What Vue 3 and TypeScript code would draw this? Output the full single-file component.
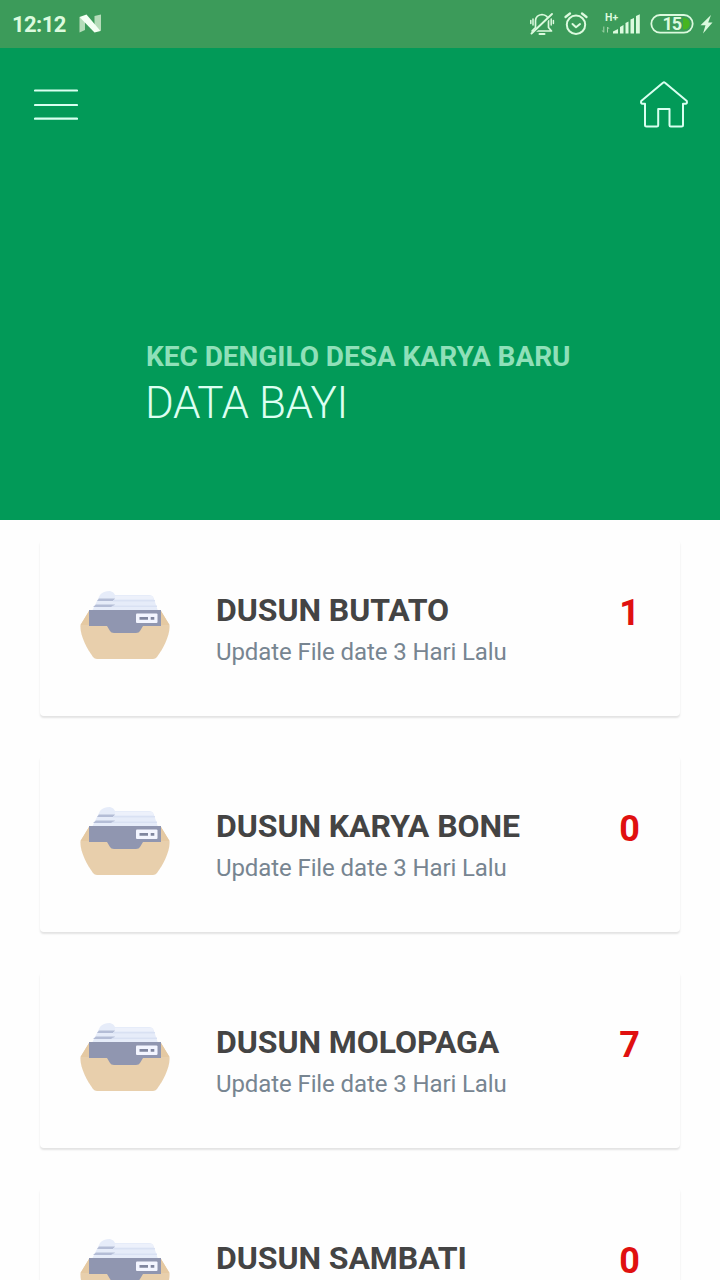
<script setup lang="ts">
interface Dusun {
  name: string
  note: string
  count: number
}

const rows: Dusun[] = [
  { name: 'DUSUN BUTATO', note: 'Update File date 3 Hari Lalu', count: 1 },
  { name: 'DUSUN KARYA BONE', note: 'Update File date 3 Hari Lalu', count: 0 },
  { name: 'DUSUN MOLOPAGA', note: 'Update File date 3 Hari Lalu', count: 7 },
  { name: 'DUSUN SAMBATI', note: 'Update File date 3 Hari Lalu', count: 0 },
]
</script>

<template>
  <div class="screen">
    <header class="status">
      <span class="time">12:12</span>
      <svg class="nougat" width="24" height="20" viewBox="0 0 24 20">
        <path d="M1.500 3 L7 6 V16 L1.500 18.500Z" fill="#b5dcb9" />
        <path d="M16.500 2 L23 .5 V17 L16.500 14Z" fill="#b5dcb9" />
        <path d="M1.500 3 L8.500 .5 L22.500 17 L16.500 18.500Z" fill="#f4fff4" />
      </svg>
      <svg class="indicators" width="192" height="48" viewBox="0 0 192 48">
        <g fill="none" stroke="#dcfade" stroke-width="1.700" stroke-linecap="round" stroke-linejoin="round">
          <path d="M4 31 H23.500 L20.500 27.500 V20.500 Q20 15 14 14.500 Q8 15 7.500 20.500 V27.500Z" />
          <path d="M11.500 34 H16.500" stroke-width="2" />
          <path d="M4.500 34 L25 14.500" stroke="#3c9b5a" stroke-width="2" />
          <path d="M3.500 33.500 L24 14" stroke-width="1.900" />
          <path d="M5 19 V25 M2.800 20.500 V23.500 M23.200 19 V25 M25.400 20.500 V23.500" stroke-width="1.500" />
          <circle cx="48" cy="24.800" r="9.200" stroke-width="2" />
          <path d="M44.500 24 L48 27.200 L52 24" stroke-width="2" />
          <path d="M37.500 17 L42 13.500 M54 13.500 L58.500 17" stroke-width="2.300" />
        </g>
        <text x="77" y="21" class="net">H+</text>
        <path d="M75.800 26.500 V32 M74.300 30.500 L75.800 32.500 M79.500 32.500 V27 L81 28.800" fill="none" stroke="#a4d5aa" stroke-width="1" />
        <g fill="#dcfade">
          <path d="M85 33.500 V31.500 L90 29 V33.500Z" />
          <path d="M92 33.500 V27 L95.500 25 V33.500Z" />
          <path d="M97.500 33.500 V23 L100.500 21.500 V33.500Z" />
          <path d="M102.500 33.500 V19.500 L106 18 V33.500Z" />
          <path d="M108 33.500 V16 L111.800 14.200 V33.500Z" />
        </g>
        <rect x="123.300" y="15" width="41.400" height="17.600" rx="8.800" fill="none" stroke="#dcfade" stroke-width="1.800" />
        <path d="M155 18 H156 A5.800 5.800 0 0 1 156 29.600 H155Z" fill="#47b51f" />
        <text x="134.500" y="30.300" class="level">15</text>
        <path d="M183 15 L172.500 25.200 H177.500 L175 33.500 L184.500 22.500 H180.200Z" fill="#dcfade" />
      </svg>
    </header>

    <section class="hero">
      <nav class="toolbar">
        <svg class="menu" width="44" height="32" viewBox="0 0 44 32">
          <path d="M1 1.500 H43 M1 16 H43 M1 29.700 H43" stroke="#d9fff0" stroke-width="2.200" stroke-linecap="round" />
        </svg>
        <svg class="home" width="50" height="50" viewBox="0 0 50 50">
          <path
            d="M24 2.700 Q25 2 26 2.700 L47.800 21 Q48.500 23.700 46.500 23.700 H44 V45 Q44 46.500 42.500 46.500 H31.800 Q30.500 46.500 30.500 45.200 V29 H19.200 V45.200 Q19.200 46.500 17.900 46.500 H7.500 Q6 46.500 6 45 V23.700 H3.500 Q1.500 23.700 2.200 21Z"
            fill="none"
            stroke="#d9fff0"
            stroke-width="2"
            stroke-linejoin="round"
          />
        </svg>
      </nav>
      <div class="heading">
        <div class="region">KEC DENGILO DESA KARYA BARU</div>
        <h1>DATA BAYI</h1>
      </div>
    </section>

    <main class="list">
      <article v-for="row in rows" :key="row.name" class="card">
        <svg class="box" width="90" height="70" viewBox="0 0 90 70">
          <path d="M20 4 Q23 0 30 0 Q34 1 35 4 H69 Q73 4 74 8 L78 20 H12Z" fill="#e6ecf9" />
          <path d="M35 5 H73 V8 H35Z" fill="#edf1fb" />
          <path d="M19 7.500 H35 L33 10 H17Z M16 13.500 H35 L33 16 H13Z" fill="#b4bdd6" />
          <path d="M33 9 H75 V10.500 H33Z M33 14.500 H77 V16 H31Z" fill="#d9e1f3" />
          <path d="M9 20 H81 L89.500 34 C90.500 44 83 58 77 66 Q75.500 68 73 68 H17 Q14.500 68 13 66 C7 58 -.5 44 .5 34Z" fill="#e8cfac" />
          <path d="M9 20 L.5 34 H9Z M81 20 L89.500 34 H81Z" fill="#e5c9a2" />
          <path d="M9 19 H81 V35 H63 L60 40 Q59 42 56 42 H34 Q31 42 30 40 L27 35 H9Z" fill="#9096b0" />
          <rect x="56" y="22.500" width="21.500" height="9.500" rx="1" fill="#f3f5ff" />
          <path d="M59.500 27.300 H68 M70.700 27.300 H74.300" stroke="#80869f" stroke-width="2.800" />
        </svg>
        <div class="copy">
          <h2>{{ row.name }}</h2>
          <p>{{ row.note }}</p>
        </div>
        <strong>{{ row.count }}</strong>
      </article>
    </main>
  </div>
</template>

<style>
body {
  margin: 0;
  overflow: hidden;
}
</style>

<style scoped>
.screen {
  width: 720px;
  height: 1280px;
  overflow: hidden;
  background: #fefefe;
  font-family: Roboto, sans-serif;
}
.status {
  display: flex;
  align-items: center;
  box-sizing: border-box;
  height: 48px;
  padding-left: 12px;
  background: #3c9b5a;
}
.time {
  width: 66px;
  color: #dcfade;
  font-size: 22px;
  font-weight: 700;
  letter-spacing: -0.6px;
  line-height: 48px;
  padding-top: 1px;
}
.indicators {
  margin-left: auto;
}
.net {
  fill: #dcfade;
  font-size: 10.5px;
  font-weight: 700;
}
.level {
  fill: #dcfade;
  font-size: 18px;
  font-weight: 700;
  letter-spacing: -1px;
}
.hero {
  height: 472px;
  background: #029a58;
}
.toolbar {
  display: flex;
  justify-content: space-between;
  align-items: flex-start;
  height: 292px;
  box-sizing: border-box;
  padding: 40px 31px 0 34px;
}
.menu {
  margin-top: 0.5px;
}
.home {
  margin-top: -8px;
}
.heading {
  padding-left: 145px;
}
.region {
  padding-left: 1px;
  color: #8fe0b9;
  font-size: 28px;
  font-weight: 700;
  letter-spacing: -0.04px;
  line-height: 34px;
}
h1 {
  margin: 0;
  color: #dcfff1;
  font-size: 44px;
  font-weight: 300;
  letter-spacing: -0.4px;
  line-height: 58px;
}
.list {
  display: flex;
  flex-direction: column;
  gap: 40px;
  padding: 20px 40px 0;
}
.card {
  display: flex;
  align-items: flex-start;
  height: 176px;
  box-sizing: border-box;
  padding: 50px 40px 0;
  border-radius: 4px;
  background: #fefefe;
  box-shadow: 0 2px 2px rgba(0, 0, 0, 0.11);
}
.box {
  margin-top: 1px;
}
.copy {
  flex: 1;
  margin-left: 46px;
}
h2 {
  margin: 0;
  color: #444;
  font-size: 32px;
  font-weight: 700;
  letter-spacing: -0.07px;
  line-height: 40px;
}
p {
  margin: 0;
  color: #778591;
  font-size: 24px;
  letter-spacing: -0.1px;
  line-height: 44px;
}
strong {
  color: #e01010;
  font-size: 36px;
  font-weight: 700;
  line-height: 47px;
}
</style>
